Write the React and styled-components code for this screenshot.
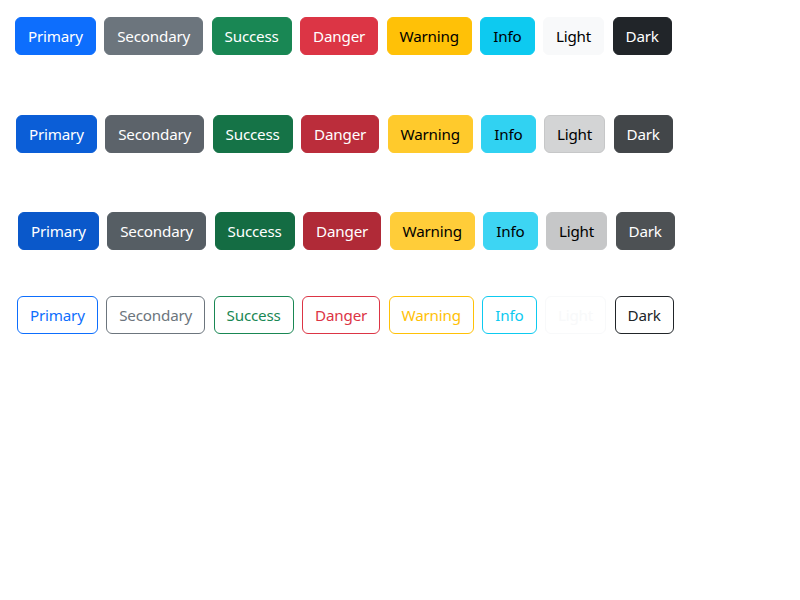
import React from 'react'
import styled, { createGlobalStyle, css } from 'styled-components'

const GlobalStyle = createGlobalStyle`
   body {
      margin: 0;
      background: #fff;
      font-family: "Noto Sans", "Open Sans", sans-serif;
   }
`

const variants = {
   primary: { bg: '#0d6efd', fg: '#fff', hover: '#0b5ed7', active: '#0a58ca' },
   secondary: { bg: '#6c757d', fg: '#fff', hover: '#5c636a', active: '#565e64' },
   success: { bg: '#198754', fg: '#fff', hover: '#157347', active: '#146c43' },
   danger: { bg: '#dc3545', fg: '#fff', hover: '#bb2d3b', active: '#b02a37' },
   warning: { bg: '#ffc107', fg: '#000', hover: '#ffca2c', active: '#ffcd39' },
   info: { bg: '#0dcaf0', fg: '#000', hover: '#31d2f2', active: '#3dd5f3' },
   light: { bg: '#f8f9fa', fg: '#000', hover: '#d3d4d5', active: '#c6c7c8', border: '#c6c7c8' },
   dark: { bg: '#212529', fg: '#fff', hover: '#424649', active: '#4d5154' },
}

const Page = styled.div`
   padding: 17px 0 0;
   display: flex;
   flex-direction: column;
`

const Row = styled.div`
   display: flex;
   gap: 8.5px;
   padding-left: ${props => props.$left}px;
   margin-bottom: ${props => props.$after}px;
`

const Button = styled.button`
   font-family: inherit;
   font-size: 15.2px;
   letter-spacing: -0.2px;
   line-height: 24px;
   padding: 6px 12px;
   border-radius: 6px;
   border: 1px solid transparent;
   cursor: pointer;

   ${props => {
      const v = variants[props.$variant]
      if (props.$state === 'outline') {
         return css`
            background: transparent;
            color: ${v.bg};
            border-color: ${v.bg};
         `
      }
      const bg = props.$state === 'hover' ? v.hover : props.$state === 'active' ? v.active : v.bg
      const bd = props.$state !== 'normal' && v.border ? v.border : bg
      return css`
         background: ${bg};
         color: ${v.fg};
         border-color: ${bd};
      `
   }}
`

const names = ['primary', 'secondary', 'success', 'danger', 'warning', 'info', 'light', 'dark']
const label = n => n.charAt(0).toUpperCase() + n.slice(1)

const rows = [
   { state: 'normal', left: 15, after: 60 },
   { state: 'hover', left: 16, after: 59 },
   { state: 'active', left: 18, after: 46 },
   { state: 'outline', left: 17, after: 0 },
]

export default function App() {
   return (
      <>
         <GlobalStyle />
         <Page>
            {rows.map(r => (
               <Row key={r.state} $left={r.left} $after={r.after}>
                  {names.map(n => (
                     <Button key={n} $variant={n} $state={r.state}>{label(n)}</Button>
                  ))}
               </Row>
            ))}
         </Page>
      </>
   )
}
